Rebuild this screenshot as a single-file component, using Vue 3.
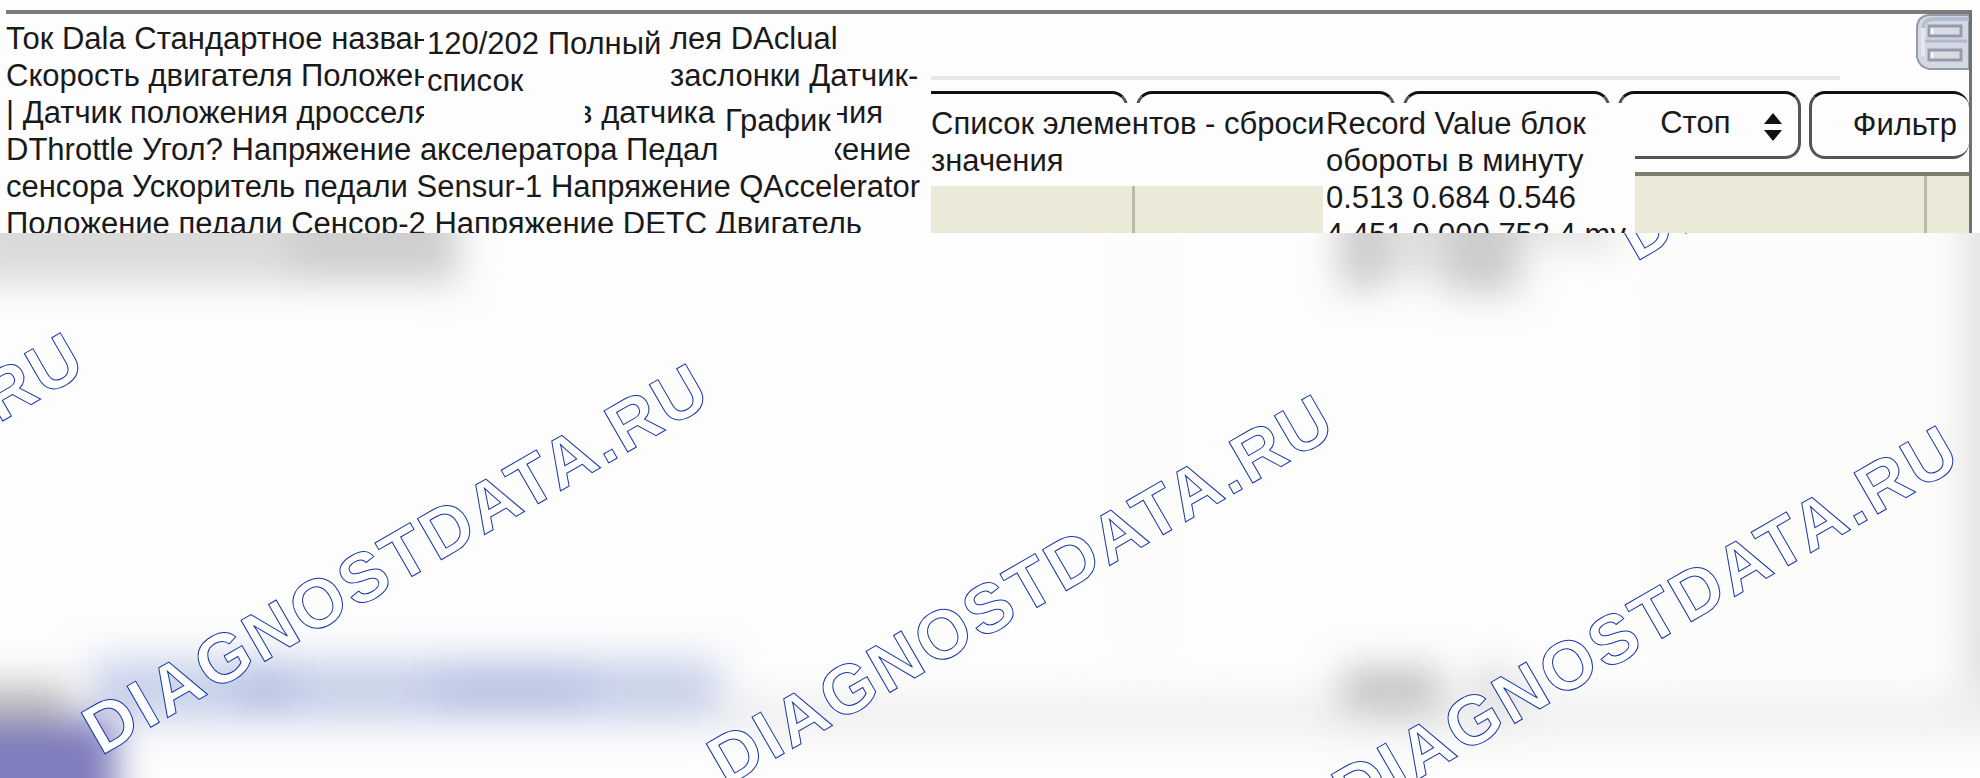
<template>
  <main class="screen">
    <section class="window">
      <div class="names">
        <p><span class="head">Ток Dala Стандартное назван</span><span class="tail">лея DAclual</span></p>
        <p><span class="head">Скорость двигателя Положен</span><span class="tail">заслонки Датчик-</span></p>
        <p>
          <span class="head">| Датчик положения дросселя</span>
          <span class="cut sensor">в датчика</span>
          <span class="cut ending">ния</span>
        </p>
        <p><span class="angle">DThrottle Угол? Напряжение акселератора Педал</span><span class="cut voltage">жение</span></p>
        <p>сенсора Ускоритель педали Sensur-1 Напряжение QAccelerator</p>
        <p>Положение педали Сенсор-2 Напряжение DETC Двигатель</p>
        <div class="label total">120/202 Полный<br>список</div>
        <div class="label graph">График</div>
      </div>

      <div class="panel">
        <div class="titlebar">
          <button class="layout" aria-label="Вид">
            <svg viewBox="0 0 54 57" aria-hidden="true">
              <path d="M54 1H13Q2 3 2 14V43Q4 53 14 55H54Z" fill="#d3d8e4" stroke="#9499a8" stroke-width="2" />
              <path d="M8 14Q9 6 17 5H54" fill="none" stroke="#b6bdce" stroke-width="4" />
              <path d="M8 14V42" stroke="#e3e7f0" stroke-width="4" />
              <path d="M10 27H52" stroke="#b1b7c6" stroke-width="3" />
              <rect x="14" y="12" width="32" height="10" fill="#d9dce4" stroke="#959bab" stroke-width="3" />
              <rect x="14" y="36" width="32" height="10" fill="#d9dce4" stroke="#959bab" stroke-width="3" />
              <path d="M17 14V20M17 38V44" stroke="#f4f6fa" stroke-width="3" />
            </svg>
          </button>
        </div>
        <div class="toolbar">
          <button class="tool first" aria-label="Список элементов"></button>
          <button class="tool" aria-label="Сброси значения"></button>
          <button class="tool" aria-label="Record"></button>
          <button class="tool stop">
            Стоп
            <svg class="arrows" viewBox="0 0 18 28" aria-hidden="true">
              <path d="M9 0L18 11H0ZM0 17H18L9 28Z" fill="#111" />
            </svg>
          </button>
          <button class="tool filter">Фильтр</button>
        </div>
        <div class="columns"><span></span><span></span><span></span></div>
        <div class="label items">Список элементов - сброси<br>значения</div>
        <div class="label record">
          Record Value блок<br>обороты в минуту<br>0.513 0.684 0.546<br>4.451 0.000 752.4 mv
        </div>
      </div>
    </section>

    <svg class="backdrop" viewBox="0 0 1980 545">
      <defs>
        <filter id="soft" x="-50%" y="-100%" width="200%" height="300%">
          <feGaussianBlur stdDeviation="18" />
        </filter>
        <filter id="softer" x="-50%" y="-100%" width="200%" height="300%">
          <feGaussianBlur stdDeviation="20" />
        </filter>
      </defs>
      <rect width="1980" height="545" fill="#fdfdfd" />
      <g filter="url(#softer)">
        <rect x="1110" y="-20" width="70" height="440" fill="#fcfcfa" />
        <rect x="1640" y="-20" width="300" height="440" fill="#fcfcfa" />
        <rect x="1966" y="-60" width="80" height="520" fill="#dedede" />
        <rect x="720" y="468" width="1320" height="30" fill="#eaeaea" />
        <rect x="90" y="428" width="630" height="58" fill="#c6cfe9" />
        <rect x="235" y="436" width="60" height="40" fill="#afbce1" />
        <rect x="430" y="436" width="160" height="40" fill="#b3bfe2" />
      </g>
      <g filter="url(#soft)">
        <rect x="-40" y="-40" width="500" height="90" fill="#dadada" />
        <rect x="290" y="-40" width="165" height="88" fill="#cfcfcf" />
        <rect x="1340" y="-40" width="45" height="96" fill="#cacaca" />
        <rect x="1385" y="-40" width="60" height="86" fill="#e0e0e0" />
        <rect x="1445" y="-40" width="75" height="100" fill="#cccccc" />
        <rect x="1520" y="-40" width="100" height="58" fill="#e6e6e6" />
        <rect x="1342" y="434" width="98" height="46" fill="#c4c4c4" />
        <rect x="1470" y="434" width="50" height="46" fill="#e0e0e0" />
        <rect x="-60" y="450" width="130" height="50" fill="#c2c0be" />
        <rect x="-60" y="486" width="176" height="130" fill="#7f7dbd" />
      </g>
      <text
        v-for="mark in marks"
        :key="mark.x"
        class="mark"
        :transform="`translate(${mark.x} ${mark.y}) rotate(-30)`"
      >DIAGNOSTDATA.RU</text>
    </svg>
  </main>
</template>

<script setup>
const marks = [
  { x: -524, y: 492 },
  { x: 101, y: 523 },
  { x: 726, y: 554 },
  { x: 1351, y: 585 },
  { x: 1636, y: 29 }
]
</script>

<style>
body {
  margin: 0;
  background: #fdfdfd;
}
</style>

<style scoped>
.screen {
  overflow: hidden;
  font-family: "Liberation Sans", Arial, sans-serif;
  font-size: 31px;
  line-height: 37px;
  color: #1a1a1a;
}

.window {
  display: grid;
  grid-template-columns: 925px 1fr;
  box-sizing: border-box;
  height: 223px;
  margin: 10px 8px 0 6px;
  border-top: 4px solid #7c7c7c;
  border-right: 3px solid #707070;
  overflow: hidden;
}

.names {
  position: relative;
  padding-top: 6px;
  white-space: nowrap;
}

.names p {
  display: flex;
  height: 37px;
  margin: 0;
}

.head {
  width: 418px;
  overflow: hidden;
}

.tail {
  margin-left: 246px;
}

.cut {
  display: flex;
  justify-content: flex-end;
  overflow: hidden;
}

.sensor {
  width: 130px;
  margin-left: 161px;
}

.ending {
  width: 46px;
  margin-left: 122px;
}

.angle {
  width: 829px;
}

.voltage {
  width: 76px;
}

.label {
  position: absolute;
  background: #fdfdfd;
  white-space: nowrap;
  overflow: hidden;
}

.total {
  top: 11px;
  left: 421px;
}

.graph {
  top: 88px;
  left: 719px;
}

.panel {
  position: relative;
  display: flex;
  flex-direction: column;
}

.titlebar {
  display: flex;
  justify-content: flex-end;
  align-items: flex-start;
  height: 77px;
  background: linear-gradient(#e8e8e8, #e8e8e8) 0 62px / 909px 4px no-repeat;
}

.layout {
  width: 54px;
  height: 57px;
  padding: 0;
  border: 0;
  background: none;
}

.layout svg {
  display: block;
  width: 100%;
}

.toolbar {
  display: grid;
  grid-template-columns: 198fr 259fr 208fr 184fr 160fr;
  gap: 8px;
  overflow: hidden;
}

.tool {
  display: flex;
  align-items: center;
  box-sizing: border-box;
  height: 68px;
  padding: 0;
  border: 3px solid #555;
  border-top-color: #111;
  border-radius: 16px;
  background: #fdfdfd;
  font: inherit;
  color: inherit;
}

.first {
  border-left: 0;
  border-top-left-radius: 0;
}

.stop {
  justify-content: flex-end;
  gap: 34px;
  padding-right: 16px;
  padding-bottom: 6px;
}

.arrows {
  width: 18px;
  height: 28px;
  margin-top: 10px;
}

.filter {
  justify-content: flex-end;
  padding-right: 12px;
  padding-bottom: 2px;
  border-right: 0;
}

.columns {
  display: grid;
  grid-template-columns: 201fr 793fr 45fr;
  flex: 1;
  margin-top: 13px;
  border-top: 4px solid #7d7c6d;
  border-bottom: 3px solid #c6c4b6;
  background: #ebe9d8;
}

.columns span + span {
  border-left: 3px solid #b9b8a9;
}

.items {
  top: 89px;
  left: 0;
  width: 396px;
  height: 83px;
  padding-top: 2px;
  box-sizing: border-box;
}

.record {
  top: 89px;
  left: 392px;
  width: 312px;
  height: 130px;
  padding: 2px 0 0 3px;
  box-sizing: border-box;
}

.backdrop {
  display: block;
  width: 100%;
  overflow: hidden;
}

.mark {
  fill: #fff;
  stroke: #1537a6;
  stroke-width: 1;
  font-size: 69px;
  font-weight: 700;
  letter-spacing: 3px;
}
</style>
